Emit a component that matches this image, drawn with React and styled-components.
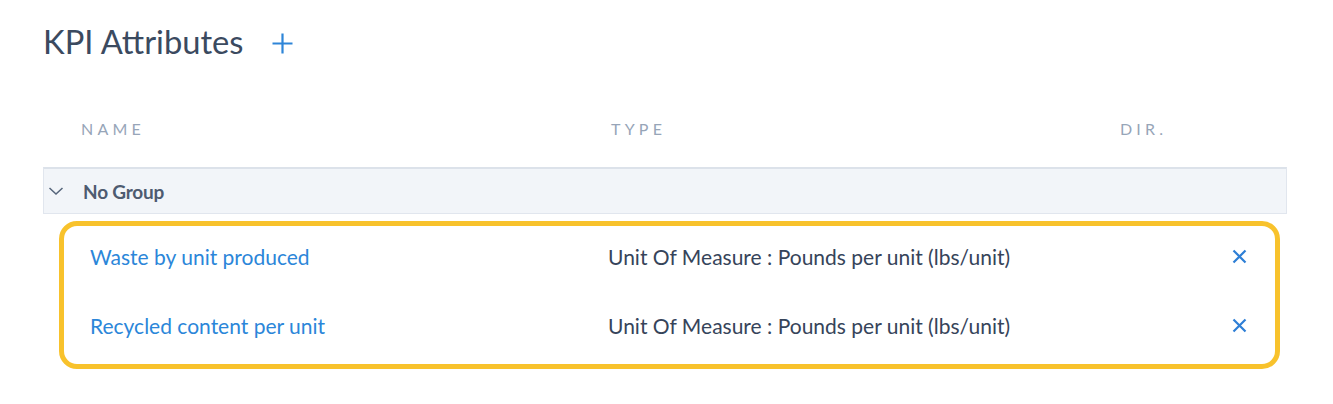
import React from "react";
import styled, { createGlobalStyle } from "styled-components";

const Global = createGlobalStyle`
  html, body { margin: 0; padding: 0; background: #ffffff; }
  body { font-family: Lato, "Open Sans", sans-serif; -webkit-font-smoothing: antialiased; }
  * { box-sizing: border-box; }
`;

const Page = styled.div`
  width: 1287px;
  padding: 24px 0 0 43px;
`;

const TitleBar = styled.div`
  display: flex;
  align-items: center;
  gap: 28px;
  height: 36px;
`;

const Title = styled.h1`
  margin: 0;
  font-size: 32.7px;
  line-height: 36px;
  font-weight: 400;
  color: #3b4a5f;
`;

const AddButton = styled.button`
  border: 0;
  background: none;
  padding: 0;
  width: 21px;
  height: 21px;
  display: flex;
  color: #2e85d8;
  cursor: pointer;
  margin-top: 2px;
`;

const HeaderRow = styled.div`
  display: grid;
  grid-template-columns: 530px 509px 1fr;
  padding-left: 38px;
  margin: 60px 0 29px;
  font-size: 16px;
  line-height: 18px;
  letter-spacing: 4.2px;
  color: #97a5b8;
  text-transform: uppercase;
`;

const GroupRow = styled.div`
  display: flex;
  align-items: center;
  gap: 19px;
  height: 47px;
  padding-left: 4px;
  background: #f2f5f9;
  border: 1px solid #e1e6ee;
  border-top: 2px solid #dce2ea;
`;

const Chevron = styled.span`
  display: flex;
  width: 16px;
  height: 8px;
  color: #56657b;
`;

const GroupName = styled.span`
  font-size: 19px;
  font-weight: 700;
  color: #4e5b70;
  letter-spacing: -0.2px;
`;

const Highlight = styled.div`
  margin: 7px 7px 0 16px;
  border: 5px solid #f8c22c;
  border-radius: 18px;
`;

const Row = styled.div`
  display: grid;
  grid-template-columns: 518px 1fr 15px;
  align-items: center;
  height: 69px;
  padding: 0 28px 8px 26px;
  font-size: 21px;
  line-height: 24px;
`;

const NameLink = styled.a`
  color: #2b86d9;
  text-decoration: none;
  cursor: pointer;
`;

const TypeText = styled.span`
  color: #36445a;
`;

const RemoveButton = styled.button`
  border: 0;
  background: none;
  padding: 0;
  width: 15px;
  height: 15px;
  display: flex;
  color: #2e7fd6;
  cursor: pointer;
`;

const rows = [
  { name: "Waste by unit produced", type: "Unit Of Measure : Pounds per unit (lbs/unit)" },
  { name: "Recycled content per unit", type: "Unit Of Measure : Pounds per unit (lbs/unit)" },
];

export default function App() {
  return (
    <>
      <Global />
      <Page>
        <TitleBar>
          <Title>KPI Attributes</Title>
          <AddButton aria-label="Add">
            <svg width="21" height="21" viewBox="0 0 21 21">
              <path d="M10.5 0.5v20M0.5 10.5h20" stroke="currentColor" strokeWidth="2.2" fill="none" />
            </svg>
          </AddButton>
        </TitleBar>
        <HeaderRow>
          <span>Name</span>
          <span>Type</span>
          <span>Dir.</span>
        </HeaderRow>
        <GroupRow>
          <Chevron>
            <svg width="16" height="8" viewBox="0 0 16 8">
              <path d="M1.5 1l6.5 6 6.5-6" stroke="currentColor" strokeWidth="1.5" fill="none" />
            </svg>
          </Chevron>
          <GroupName>No Group</GroupName>
        </GroupRow>
        <Highlight>
          {rows.map((r) => (
            <Row key={r.name}>
              <NameLink>{r.name}</NameLink>
              <TypeText>{r.type}</TypeText>
              <RemoveButton aria-label="Remove">
                <svg width="15" height="15" viewBox="0 0 15 15">
                  <path d="M1.5 1.5l12 12M13.5 1.5l-12 12" stroke="currentColor" strokeWidth="2.2" fill="none" />
                </svg>
              </RemoveButton>
            </Row>
          ))}
        </Highlight>
      </Page>
    </>
  );
}
